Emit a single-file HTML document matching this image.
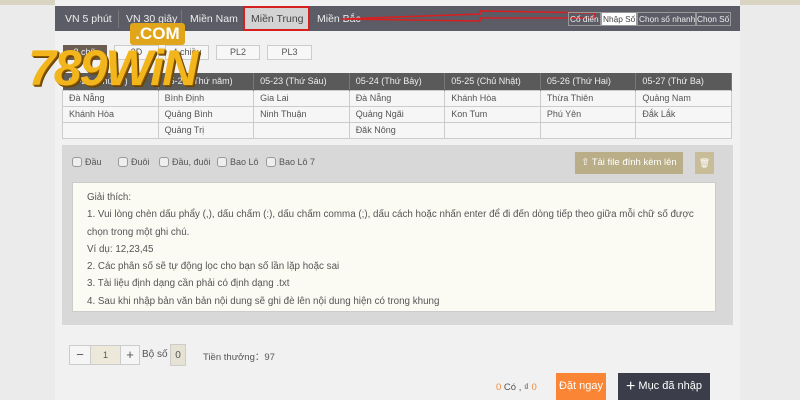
<!DOCTYPE html>
<html><head><meta charset="utf-8"><style>
*{box-sizing:border-box;margin:0;padding:0}
body{width:800px;height:400px;overflow:hidden;background:#ebebeb;font-family:"Liberation Sans",sans-serif;font-size:9px;color:#555;position:relative}
.abs{position:absolute}
.main{left:55px;top:0;width:685px;height:400px;background:#f1f1f1}
.top{left:0;top:0;width:800px;height:5px;background:#d9d3c2}
.nav{left:55px;top:6px;width:685px;height:25px;background:#5b5c66}
.nav span{position:absolute;top:7px;color:#eee;font-size:10.5px}
.sep{position:absolute;top:4px;width:1px;height:18px;background:#777}
.rt{position:absolute;top:6px;height:14px;border:1px solid #999;color:#eee;font-size:8.3px;padding:1px 1px;line-height:10px;white-space:nowrap}
.tab{position:absolute;top:45px;height:15px;border:1px solid #ccc;background:#f7f7f7;text-align:center;font-size:9px;line-height:13px;color:#555}
table{position:absolute;left:62px;top:73px;width:670px;border-collapse:collapse;table-layout:fixed}
th{background:#5a5a5a;color:#eee;font-weight:normal;height:17px;text-align:left;padding-left:6px;font-size:9px;border-right:1px solid #777;white-space:nowrap;overflow:hidden}
td{height:16px;border:1px solid #ccc;padding-left:6px;background:#f6f6f6;font-size:9px;color:#555}
.panel{left:62px;top:145px;width:671px;height:180px;background:#d8d8d8}
.cb{position:absolute;top:157px;font-size:9px}
.cb i{display:inline-block;width:10px;height:10px;border:1px solid #999;border-radius:3px;background:#eee;vertical-align:-2px;margin-right:3px}
.ta{left:72px;top:182px;width:644px;height:130px;background:#fbfaf3;border:1px solid #ccc;padding:6px 9px 0 14px;line-height:17.3px;font-size:9.8px;color:#555;white-space:nowrap}
.btn{position:absolute;color:#fff;text-align:center}
</style></head><body>
<div class="abs top"></div>
<div class="abs main"></div>
<div class="abs nav">
<span style="left:10px">VN 5 phút</span><div class="sep" style="left:63px"></div>
<span style="left:71px">VN 30 giây</span><div class="sep" style="left:126px"></div>
<span style="left:135px">Miền Nam</span>
<div style="position:absolute;left:188px;top:0;width:67px;height:25px;background:#d3d3d3;border:2px solid #d62020"></div>
<span style="left:196px;color:#444">Miền Trung</span>
<span style="left:262px">Miền Bắc</span>
<svg style="position:absolute;left:285px;top:3px" width="270" height="14"><path d="M2 10 L140 5 L140 2 L255 4 L255 9 L140 9 L140 12 Z" fill="none" stroke="#d62020" stroke-width="1.6"/></svg>
<div class="rt" style="left:513px">Cổ điển</div>
<div class="rt" style="left:546px;background:#fff;color:#444">Nhập Số</div>
<div class="rt" style="left:582px">Chọn số nhanh</div>
<div class="rt" style="left:640px">Chọn Số</div>
</div>
<div class="tab" style="left:63px;width:44px;background:#6b5d52;color:#eee;border-color:#6b5d52">3 chữ</div>
<div class="tab" style="left:114px;width:45px">3D</div>
<div class="tab" style="left:165px;width:44px">4 chiều</div>
<div class="tab" style="left:216px;width:44px">PL2</div>
<div class="tab" style="left:267px;width:45px">PL3</div>
<table>
<tr><th>05-21 (Thứ tư)</th><th>05-22 (Thứ năm)</th><th>05-23 (Thứ Sáu)</th><th>05-24 (Thứ Bảy)</th><th>05-25 (Chủ Nhật)</th><th>05-26 (Thứ Hai)</th><th>05-27 (Thứ Ba)</th></tr>
<tr><td>Đà Nẵng</td><td>Bình Định</td><td>Gia Lai</td><td>Đà Nẵng</td><td>Khánh Hòa</td><td>Thừa Thiên</td><td>Quảng Nam</td></tr>
<tr><td>Khánh Hòa</td><td>Quảng Bình</td><td>Ninh Thuận</td><td>Quảng Ngãi</td><td>Kon Tum</td><td>Phú Yên</td><td>Đắk Lắk</td></tr>
<tr><td></td><td>Quảng Trị</td><td></td><td>Đăk Nông</td><td></td><td></td><td></td></tr>
</table>
<div class="abs" style="left:130px;top:23px;width:55px;height:22px;background:#e0a51a;border-radius:3px;color:#fff;font-weight:bold;font-size:17px;text-align:center;line-height:22px">.COM</div>
<div class="abs" style="left:28px;top:40px;font-size:50px;font-weight:bold;font-style:italic;color:#f2b51c;letter-spacing:-2px;line-height:56px;text-shadow:1px 1px 0 #8a5a00,2px 2px 0 #6a4200">789WiN</div>
<div class="abs panel"></div>
<div class="cb" style="left:72px"><i></i>Đầu</div>
<div class="cb" style="left:118px"><i></i>Đuôi</div>
<div class="cb" style="left:159px"><i></i>Đầu, đuôi</div>
<div class="cb" style="left:217px"><i></i>Bao Lô</div>
<div class="cb" style="left:266px"><i></i>Bao Lô 7</div>
<div class="btn" style="left:575px;top:152px;width:108px;height:22px;background:#b9ae87;line-height:22px;font-size:9.5px">⇧ Tải file đính kèm lên</div>
<div class="btn" style="left:695px;top:152px;width:19px;height:22px;background:#c8bd98;line-height:22px">🗑</div>
<div class="abs ta">Giải thích:<br>1. Vui lòng chèn dấu phẩy (,), dấu chấm (:), dấu chấm comma (;), dấu cách hoặc nhấn enter để đi đến dòng tiếp theo giữa mỗi chữ số được<br>chọn trong một ghi chú.<br>Ví dụ: 12,23,45<br>2. Các phân số sẽ tự động lọc cho bạn số lần lặp hoặc sai<br>3. Tài liệu định dạng cần phải có định dạng .txt<br>4. Sau khi nhập bản văn bản nội dung sẽ ghi đè lên nội dung hiện có trong khung</div>
<div class="abs" style="left:69px;top:345px;width:22px;height:20px;border:1px solid #ccc;background:#f5f5f5;text-align:center;line-height:18px;font-size:13px">−</div>
<div class="abs" style="left:90px;top:345px;width:31px;height:20px;border:1px solid #ccc;background:#ece8da;text-align:center;line-height:18px">1</div>
<div class="abs" style="left:120px;top:345px;width:20px;height:20px;border:1px solid #ccc;background:#f5f5f5;text-align:center;line-height:18px;font-size:13px">+</div>
<div class="abs" style="left:142px;top:349px;font-size:10px">Bộ số</div>
<div class="abs" style="left:170px;top:344px;width:16px;height:22px;border:1px solid #ccc;background:#e6e2d4;text-align:center;line-height:22px;font-size:10px">0</div>
<div class="abs" style="left:203px;top:349px;font-size:9.5px">Tiền thưởng：97</div>
<div class="abs" style="left:496px;top:382px;font-size:9.5px"><span style="color:#f08a3c">0</span> Có , ₫ <span style="color:#f08a3c">0</span></div>
<div class="btn" style="left:556px;top:373px;width:50px;height:27px;background:#f98535;line-height:26px;font-size:11px">Đặt ngay</div>
<div class="btn" style="left:618px;top:373px;width:92px;height:27px;background:#3b3d4a;line-height:26px;font-size:11px"><span style="font-size:16px;vertical-align:-2px">+</span> Mục đã nhập</div>
</body></html>
